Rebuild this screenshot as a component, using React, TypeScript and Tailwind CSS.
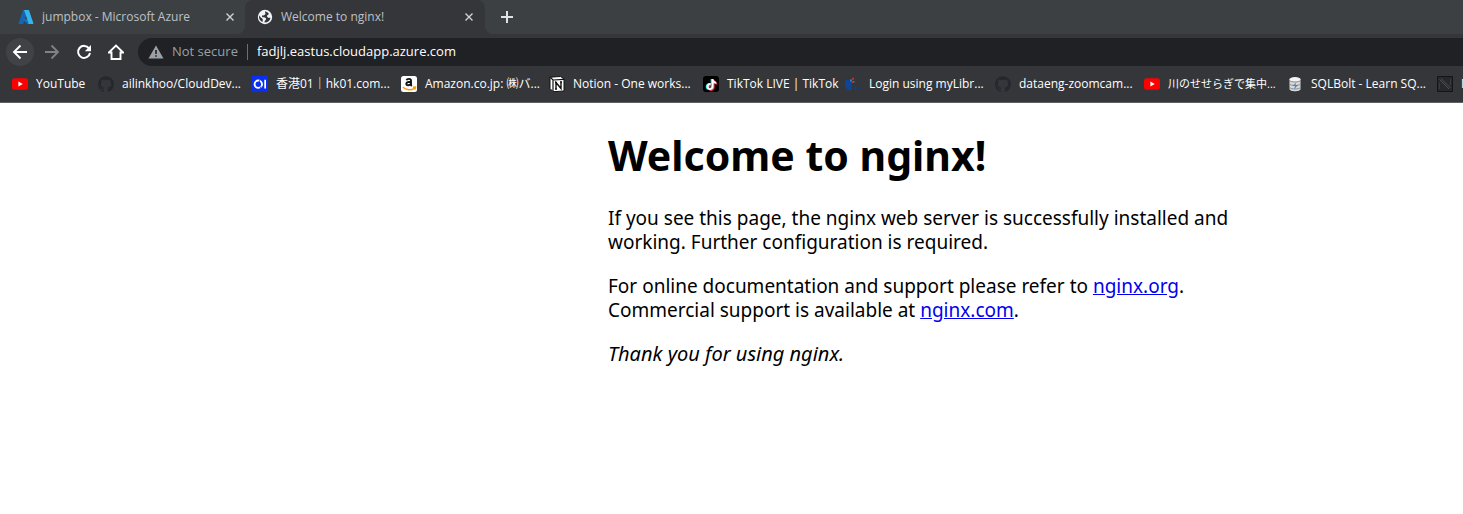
import type { ReactNode } from "react";
import { SiGithub, SiTiktok } from "react-icons/si";

const ui = "font-['Open_Sans','Noto_Sans_CJK_JP',sans-serif]";

function AzureIcon() {
  return (
    <svg viewBox="0 0 96 96" className="size-4 shrink-0" aria-hidden="true">
      <path fill="#1565b5" d="M33.3 6.5h26L32.300 86.500a4.100 4.100 0 0 1-3.900 2.800H8.100a4.100 4.100 0 0 1-3.900-5.500L29.400 9.300a4.100 4.100 0 0 1 3.900-2.800z" />
      <path fill="#0f6fc5" d="M71.200 60.300H29.900a1.900 1.900 0 0 0-1.300 3.300l26.500 24.800a4.200 4.200 0 0 0 2.900 1.100h23.400z" />
      <path fill="#35b5ee" d="M66.600 9.400a4.100 4.100 0 0 0-3.900-2.800h-29a4.100 4.100 0 0 1 3.900 2.800l25.200 74.500a4.100 4.100 0 0 1-3.900 5.500h29a4.100 4.100 0 0 0 3.900-5.500z" />
    </svg>
  );
}

function GlobeIcon() {
  return (
    <svg viewBox="0 0 16 16" className="size-4 shrink-0" aria-hidden="true">
      <circle cx="8" cy="8" r="7.200" fill="#f1f3f4" />
      <path d="M8.500 2.200C7 3.500 9.500 4 8 5.500S4.500 6 5 7.500s3.500.5 4 2-1.500 1.500-1.500 4c3.500 0 5.500-2 6-4.500-1.500-.5-3 0-3.500-1.500S12.500 6 11.500 4z" fill="#35363a" />
      <path d="M2.200 6.500c1 .5 1 2 2.300 2.500s1.500 1.500 1 4C3 12 1.500 9.500 2.200 6.500z" fill="#35363a" />
    </svg>
  );
}

function YoutubeIcon() {
  return (
    <svg viewBox="0 0 16 16" className="size-4 shrink-0" aria-hidden="true">
      <rect y="2.300" width="16" height="11.400" rx="2.600" fill="#f00" />
      <path d="M6.400 5.500v5L10.700 8z" fill="#fff" />
    </svg>
  );
}

function Hk01Icon() {
  return (
    <svg viewBox="0 0 16 16" className="size-4 shrink-0" aria-hidden="true">
      <path d="M0 0h16v16H0z" fill="#0a2ff0" />
      <circle cx="6.300" cy="8.200" r="3.700" fill="none" stroke="#fff" strokeWidth="1.900" />
      <path d="m6.500 7 2-4M8 13.500l1-3" stroke="#0a2ff0" strokeWidth=".9" />
      <path d="M12.300 3.800h1.700v8.800h-1.700z" fill="#fff" />
    </svg>
  );
}

function NotionIcon() {
  return (
    <svg viewBox="0 0 16 16" className="size-4 shrink-0" aria-hidden="true">
      <path d="M1 1.200 11.500.5 15 3v12l-11 .7L1 12.500z" fill="#fff" stroke="#111" />
      <path d="M1.500 1.500 4 4l11-.700M4 4v11.500" fill="none" stroke="#111" strokeWidth="1.200" />
      <path d="M7 13V6.500l5 6V6M6 6.500h2M11 6h2M6 13h2" fill="none" stroke="#111" strokeWidth="1.400" />
    </svg>
  );
}

function TikTokIcon() {
  return (
    <span className="relative block size-4 shrink-0 rounded-[3px] bg-black">
      <SiTiktok className="absolute top-[3px] left-[2px] size-[11px] text-[#25f4ee]" />
      <SiTiktok className="absolute top-1 left-1 size-[11px] text-[#fe2c55]" />
      <SiTiktok className="absolute top-[3px] left-[3px] size-[11px] text-white" />
    </span>
  );
}

function AmazonIcon() {
  return (
    <svg viewBox="0 0 16 16" className="size-4 shrink-0" aria-hidden="true">
      <rect width="16" height="16" rx="2.500" fill="#fff" />
      <path d="M5.500 4.300C6 2.500 10 2.300 10 4.500v4c0 .8.300 1.200.8 1.600M10 5.800C7 5.800 5.300 6.400 5.300 8s3.700 2.100 4.700-.700" fill="none" stroke="#111" strokeWidth="1.900" />
      <path d="M1.800 11.300c3.500 3 8.400 3.100 11.700 1M12 11.200l2.500-.2-.6 2.500" fill="none" stroke="#ff9900" strokeWidth="1.400" />
    </svg>
  );
}

function LibraryIcon() {
  return (
    <svg viewBox="0 0 16 16" className="size-4 shrink-0" aria-hidden="true">
      <path d="M0 5.500 2.500 3l3.500 3 .8 2v6H3.500L0 11.500z" fill="#0b459c" />
      <path d="M5 3.500h2v2H5zM8 5h1.500v1.500H8z" fill="#3d7fb8" />
      <path d="M7 1.800h2v2H7zM6.500 5.500H8V7H6.500z" fill="#b8352f" />
      <path d="M9 11h2.500v2H9zM13 11h2.500v2H13z" fill="#173f7c" />
    </svg>
  );
}

function DatabaseIcon() {
  return (
    <svg viewBox="0 0 16 16" className="size-4 shrink-0" aria-hidden="true">
      <path d="M2.500 3v10c0 3 11 3 11 0V3z" fill="#d9d9d6" />
      <ellipse cx="8" cy="3.200" rx="5.500" ry="2.200" fill="#f4f4f1" />
      <path d="M2.500 4.500c1.500 2 9.500 2 11 0M2.500 8c1.500 2 9.500 2 11 0M2.500 11.500c1.500 2 9.500 2 11 0" fill="none" stroke="#77797a" strokeWidth=".8" />
      <path d="M9 6.500 5.500 10H8l-1 3.500L11 9H8.500z" fill="#4a86c5" />
    </svg>
  );
}

function SlashIcon() {
  return (
    <svg viewBox="0 0 16 16" className="size-4 shrink-0" aria-hidden="true">
      <path d="M.5.500h15v15H.5z" fill="#27282b" stroke="#141517" />
      <path d="m2.500 3.500 9.500 9.500M4 2.500l9.500 9.500" fill="none" stroke="#505156" />
      <path d="M2.500 7v6M13.500 3v6" fill="none" stroke="#3a3b3f" />
    </svg>
  );
}

function GithubIcon() {
  return <SiGithub className="size-4 shrink-0 text-[#24292e]" aria-hidden="true" />;
}

type Bookmark = { label: string; icon: ReactNode; size: string };

const bookmarks: Bookmark[] = [
  { label: "YouTube", icon: <YoutubeIcon />, size: "w-[86px] text-[12px]" },
  { label: "ailinkhoo/CloudDev...", icon: <GithubIcon />, size: "w-[154px] text-[12px]" },
  { label: "香港01｜hk01.com...", icon: <Hk01Icon />, size: "w-[149px] text-[12px]" },
  { label: "Amazon.co.jp: ㈱バ...", icon: <AmazonIcon />, size: "w-[148px] text-[12px]" },
  { label: "Notion - One works...", icon: <NotionIcon />, size: "w-[154px] text-[12px]" },
  { label: "TikTok LIVE | TikTok", icon: <TikTokIcon />, size: "w-[142px] text-[12px]" },
  { label: "Login using myLibr...", icon: <LibraryIcon />, size: "w-[150px] text-[12px]" },
  { label: "dataeng-zoomcam...", icon: <GithubIcon />, size: "w-[149px] text-[12px]" },
  { label: "川のせせらぎで集中...", icon: <YoutubeIcon />, size: "w-[143px] text-[11px]" },
  { label: "SQLBolt - Learn SQ...", icon: <DatabaseIcon />, size: "w-[150px] text-[12px]" },
  { label: "N", icon: <SlashIcon />, size: "w-[80px] text-[12px]" },
];

function CloseIcon() {
  return (
    <svg viewBox="0 0 16 16" className="size-4" aria-hidden="true">
      <path d="m4.500 4.500 7 7m0-7-7 7" stroke="#d0d2d6" strokeWidth="1.400" />
    </svg>
  );
}

function Tab({ icon, title, active }: { icon: ReactNode; title: string; active?: boolean }) {
  return (
    <div
      className={
        active
          ? "flex h-full w-60 items-center gap-2 rounded-t-lg bg-[#35363a] pr-2 pl-3"
          : "flex h-full w-[245px] items-center gap-2 rounded-br-lg bg-[#3c4043] pr-[7px] pl-[18px]"
      }
    >
      {icon}
      <span className="flex-1 truncate text-[12px] text-[#bdc1c6]">{title}</span>
      <button type="button" aria-label={"Close " + title}>
        <CloseIcon />
      </button>
    </div>
  );
}

export default function App() {
  return (
    <div className="min-h-screen overflow-hidden bg-white">
      <header className={"border-b border-[#5f6063] bg-[#35363a] " + ui}>
        <div className="flex h-[34px]">
          <Tab icon={<AzureIcon />} title="jumpbox - Microsoft Azure" />
          <div className="flex bg-[linear-gradient(#3c4043_50%,#35363a_50%)]">
            <Tab active icon={<GlobeIcon />} title="Welcome to nginx!" />
          </div>
          <div className="flex flex-1 items-center rounded-bl-lg bg-[#3c4043] pl-3">
            <button type="button" aria-label="New tab">
              <svg viewBox="0 0 20 20" className="size-5" aria-hidden="true">
                <path d="M10 4v12M4 10h12" stroke="#dfe1e5" strokeWidth="2" />
              </svg>
            </button>
          </div>
        </div>

        <div className="flex h-9 items-center gap-1 pl-1.5">
          <button type="button" aria-label="Back" className="flex size-7 items-center justify-center rounded-full bg-[#414246]">
            <svg viewBox="0 0 16 16" className="size-4" aria-hidden="true">
              <path d="M15 8H2M8.500 1.500 2 8l6.500 6.500" fill="none" stroke="#fff" strokeWidth="1.900" />
            </svg>
          </button>
          <button type="button" aria-label="Forward" className="flex size-7 items-center justify-center">
            <svg viewBox="0 0 16 16" className="size-4" aria-hidden="true">
              <path d="M1 8h13M7.500 1.500 14 8l-6.500 6.500" fill="none" stroke="#818286" strokeWidth="1.800" />
            </svg>
          </button>
          <button type="button" aria-label="Reload" className="flex size-7 items-center justify-center">
            <svg viewBox="0 0 16 16" className="size-4" aria-hidden="true">
              <path d="M13 4.400A6 6 0 1 0 14 9" fill="none" stroke="#fff" strokeWidth="2" />
              <path d="M15 1v6.200H8.800z" fill="#fff" />
            </svg>
          </button>
          <button type="button" aria-label="Home" className="flex size-7 items-center justify-center">
            <svg viewBox="0 0 16 16" className="size-4" aria-hidden="true">
              <path d="M.8 8.500h2.700V15h9V8.500h2.700L8 1.500z" fill="none" stroke="#fff" strokeWidth="1.900" />
            </svg>
          </button>
          <div className="ml-1 flex h-7 flex-1 items-center rounded-l-full bg-[#202124] pl-2.5">
            <svg viewBox="0 0 16 16" className="size-4" aria-hidden="true">
              <path d="M8 1.500 15.500 14.500H.5z" fill="#9aa0a6" />
              <path d="M7.200 6h1.600v4H7.200zM7.200 11.200h1.600v1.600H7.200z" fill="#202124" />
            </svg>
            <span className="ml-2 w-[75px] text-[13px] whitespace-nowrap text-[#9aa0a6]">Not secure</span>
            <span className="h-4 w-px bg-[#6b6f73]" />
            <input
              aria-label="Address"
              defaultValue="fadjlj.eastus.cloudapp.azure.com"
              className="ml-[9px] flex-1 bg-transparent text-[13px] text-white outline-none"
            />
          </div>
        </div>

        <nav aria-label="Bookmarks" className="flex h-8 items-center overflow-hidden pb-1 pl-3">
          {bookmarks.map((b) => (
            <a key={b.label} href="#" className={"flex shrink-0 items-center gap-2 whitespace-nowrap text-white " + b.size}>
              {b.icon}
              {b.label}
            </a>
          ))}
        </nav>
      </header>

      <main className="pl-[608px] font-['Noto_Sans',sans-serif] text-[19px] leading-6 text-black">
        <div className="max-w-[700px]">
          <h1 className="pt-7 text-[41px] leading-[48px] font-bold">Welcome to nginx!</h1>
          <p className="mt-[27px]">
            If you see this page, the nginx web server is successfully installed and
            <br />
            working. Further configuration is required.
          </p>
          <p className="mt-5">
            For online documentation and support please refer to{" "}
            <a href="#org" className="text-[#0000ee] underline">nginx.org</a>.
            <br />
            Commercial support is available at{" "}
            <a href="#com" className="text-[#0000ee] underline">nginx.com</a>.
          </p>
          <p className="mt-5 text-[20px] italic">Thank you for using nginx.</p>
        </div>
      </main>
    </div>
  );
}
